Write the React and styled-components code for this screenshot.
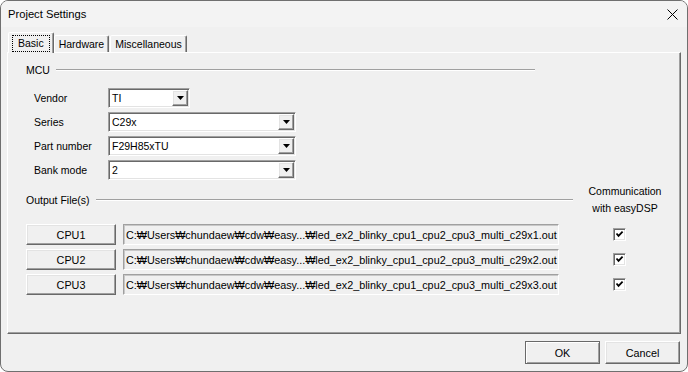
import React from 'react'
import styled, { createGlobalStyle } from 'styled-components'

const GlobalStyle = createGlobalStyle`
  html, body {
    margin: 0;
    padding: 0;
    background: #ffffff;
  }
  body {
    font-family: 'Liberation Sans', Arial, sans-serif;
    font-size: 10.5px;
    color: #000;
  }
`

const raised = `
  border-style: solid;
  border-width: 1px;
  border-color: #ffffff #696969 #696969 #ffffff;
  box-shadow: inset -1px -1px 0 #a0a0a0, inset 1px 1px 0 #e3e3e3;
`

const sunken = `
  border-style: solid;
  border-width: 1px;
  border-color: #a0a0a0 #ffffff #ffffff #a0a0a0;
  box-shadow: inset 1px 1px 0 #696969, inset -1px -1px 0 #e3e3e3;
`

const Window = styled.div`
  box-sizing: border-box;
  width: 688px;
  height: 372px;
  border: 1px solid #6f6f6f;
  border-radius: 8px;
  background: #f0f0f0;
  overflow: hidden;
  display: flex;
  flex-direction: column;
`

const TitleBar = styled.div`
  height: 26px;
  flex: none;
  display: flex;
  align-items: center;
  justify-content: space-between;
  padding: 0 9px 0 7px;
  background: #f3f3f3;
`

const Title = styled.span`
  font-size: 11.2px;
`

const CloseButton = styled.span`
  display: flex;
  width: 12px;
  height: 12px;
  align-items: center;
  justify-content: center;
`

const Body = styled.div`
  flex: 1;
  display: flex;
  flex-direction: column;
  padding: 6px 6px 0 6px;
`

const TabStrip = styled.div`
  display: flex;
  align-items: flex-end;
  height: 20px;
  padding-left: 1px;
  position: relative;
  z-index: 1;
  margin-bottom: -1px;
`

const Tab = styled.div`
  box-sizing: border-box;
  display: flex;
  align-items: center;
  justify-content: center;
  height: ${p => (p.$active ? '21px' : '17px')};
  padding: 0 ${p => (p.$active ? '3px' : '4px')};
  margin-right: ${p => (p.$active ? '0' : '1px')};
  margin-bottom: ${p => (p.$active ? '0' : '1px')};
  background: #f0f0f0;
  border-style: solid;
  border-width: 1px 1px 0 1px;
  border-color: #ffffff #696969 transparent #ffffff;
  border-radius: 2px 2px 0 0;
  box-shadow: inset -1px 0 0 #a0a0a0;
  white-space: nowrap;
`

const FocusRing = styled.span`
  border: 1px dotted #000;
  padding: 1px 5px 2px;
`

const TabPanel = styled.div`
  box-sizing: border-box;
  height: 282px;
  display: flex;
  flex-direction: column;
  padding: 10px 0 0 18px;
  ${raised}
  box-shadow: inset -1px -1px 0 #a0a0a0;
`

const GroupHeader = styled.div`
  display: flex;
  align-items: center;
  gap: 6px;
  width: ${p => p.$width}px;
  height: 14px;
`

const Rule = styled.div`
  flex: 1;
  height: 0;
  border-top: 1px solid #a0a0a0;
  border-bottom: 1px solid #ffffff;
`

const FieldList = styled.div`
  display: flex;
  flex-direction: column;
  gap: 4px;
  margin-top: 11px;
  padding-left: 8px;
`

const FieldRow = styled.div`
  display: flex;
  align-items: center;
  height: 20px;
`

const FieldLabel = styled.span`
  width: 74px;
`

const Combo = styled.div`
  box-sizing: border-box;
  width: ${p => p.$width}px;
  height: 20px;
  display: flex;
  align-items: center;
  background: #ffffff;
  padding: 1px;
  ${sunken}
`

const ComboText = styled.span`
  flex: 1;
  padding-left: 2px;
`

const DropButton = styled.span`
  box-sizing: border-box;
  width: 16px;
  height: 16px;
  display: flex;
  align-items: center;
  justify-content: center;
  background: #f0f0f0;
  ${raised}
`

const OutputHeader = styled.div`
  display: flex;
  align-items: center;
  margin-top: 3px;
  height: 34px;
`

const CommNote = styled.div`
  width: 74px;
  margin-left: 15px;
  text-align: center;
  line-height: 17px;
`

const CpuList = styled.div`
  display: flex;
  flex-direction: column;
  gap: 4px;
  margin-top: 7px;
`

const CpuRow = styled.div`
  display: flex;
  align-items: center;
  height: 21px;
`

const PushButton = styled.div`
  box-sizing: border-box;
  width: ${p => p.$width || 75}px;
  height: ${p => p.$height || 23}px;
  display: flex;
  align-items: center;
  justify-content: center;
  background: #f0f0f0;
  font-size: 10.8px;
  ${raised}
  ${p => p.$default && `
    border-color: #696969;
    box-shadow: inset 1px 1px 0 #ffffff, inset -1px -1px 0 #a0a0a0;
  `}
`

const PathField = styled.div`
  box-sizing: border-box;
  width: 436px;
  height: 21px;
  margin-left: 7px;
  display: flex;
  align-items: center;
  padding-left: 2px;
  background: #f0f0f0;
  font-size: 10.8px;
  white-space: nowrap;
  overflow: hidden;
  ${sunken}
  box-shadow: inset 1px 1px 0 #c8c8c8;
`

const CheckBox = styled.span`
  box-sizing: border-box;
  width: 13px;
  height: 13px;
  margin-left: 54px;
  display: flex;
  align-items: center;
  justify-content: center;
  background: #ffffff;
  ${sunken}
`

const Footer = styled.div`
  display: flex;
  justify-content: flex-end;
  gap: 5px;
  margin-top: 7px;
  padding-right: 1px;
`

const DownArrow = () => (
  <svg width="7" height="4" viewBox="0 0 7 4">
    <polygon points="0,0 7,0 3.5,4" fill="#000" />
  </svg>
)

const CheckMark = () => (
  <svg width="9" height="9" viewBox="0 0 9 9">
    <path d="M1.5 3.5 L3.5 5.8 L7.6 1.6" fill="none" stroke="#000" strokeWidth="1.8" />
  </svg>
)

const fields = [
  { label: 'Vendor', value: 'TI', width: 82 },
  { label: 'Series', value: 'C29x', width: 188 },
  { label: 'Part number', value: 'F29H85xTU', width: 188 },
  { label: 'Bank mode', value: '2', width: 188 },
]

const cpus = [1, 2, 3]

const App = () => {
  return (
    <Window>
      <GlobalStyle />
      <TitleBar>
        <Title>Project Settings</Title>
        <CloseButton>
          <svg width="11" height="11" viewBox="0 0 11 11">
            <path d="M0.5 0.5 L10.5 10.5 M10.5 0.5 L0.5 10.5" stroke="#000" strokeWidth="1" />
          </svg>
        </CloseButton>
      </TitleBar>
      <Body>
        <TabStrip>
          <Tab $active>
            <FocusRing>Basic</FocusRing>
          </Tab>
          <Tab>Hardware</Tab>
          <Tab>Miscellaneous</Tab>
        </TabStrip>
        <TabPanel>
          <GroupHeader $width={509}>
            <span>MCU</span>
            <Rule />
          </GroupHeader>
          <FieldList>
            {fields.map(f => (
              <FieldRow key={f.label}>
                <FieldLabel>{f.label}</FieldLabel>
                <Combo $width={f.width}>
                  <ComboText>{f.value}</ComboText>
                  <DropButton>
                    <DownArrow />
                  </DropButton>
                </Combo>
              </FieldRow>
            ))}
          </FieldList>
          <OutputHeader>
            <GroupHeader $width={547}>
              <span>Output File(s)</span>
              <Rule />
            </GroupHeader>
            <CommNote>
              Communication
              <br />
              with easyDSP
            </CommNote>
          </OutputHeader>
          <CpuList>
            {cpus.map(n => (
              <CpuRow key={n}>
                <PushButton $width={90} $height={21}>CPU{n}</PushButton>
                <PathField>
                  C:₩Users₩chundaew₩cdw₩easy...₩led_ex2_blinky_cpu1_cpu2_cpu3_multi_c29x{n}.out
                </PathField>
                <CheckBox>
                  <CheckMark />
                </CheckBox>
              </CpuRow>
            ))}
          </CpuList>
        </TabPanel>
        <Footer>
          <PushButton $default>OK</PushButton>
          <PushButton>Cancel</PushButton>
        </Footer>
      </Body>
    </Window>
  )
}

export default App
